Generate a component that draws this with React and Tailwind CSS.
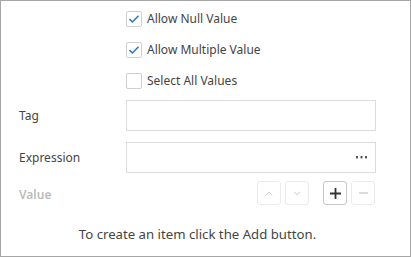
import React from "react";

function Check({ checked, label }) {
  return (
    <div className="flex h-[31px] items-center">
      <div className="flex h-[16px] w-[16px] items-center justify-center rounded-[2px] border border-[#cfcfcf] bg-white">
        {checked && (
          <svg width="12" height="10" viewBox="0 0 12 10">
            <path d="M1.5 5.2 L4.5 8 L10.5 1.8" fill="none" stroke="#337ab7" strokeWidth="1.6" />
          </svg>
        )}
      </div>
      <span className="ml-[5px] text-[12px] leading-none text-[#444]">{label}</span>
    </div>
  );
}

function Btn({ children, strong }) {
  return (
    <div
      className={
        "flex h-[24px] w-[24px] items-center justify-center rounded-[3px] border bg-white " +
        (strong ? "border-[#c8c8c8]" : "border-[#ebebeb]")
      }
    >
      {children}
    </div>
  );
}

export default function App() {
  return (
    <div
      className="box-border flex h-[257px] w-[411px] flex-col border border-[#a6a6a6] bg-white"
      style={{ fontFamily: '"Noto Sans", "Open Sans", sans-serif' }}
    >
      <div className="flex flex-col pl-[125px] pt-[2px]">
        <Check checked label="Allow Null Value" />
        <Check checked label="Allow Multiple Value" />
        <Check label="Select All Values" />
      </div>
      <div className="mt-[4px] flex items-center">
        <div className="w-[125px] pl-[18px] text-[12px] text-[#444]">Tag</div>
        <div className="h-[31px] w-[250px] border border-[#dcdcdc]" />
      </div>
      <div className="mt-[11px] flex items-center">
        <div className="w-[125px] pl-[18px] text-[12px] text-[#444]">Expression</div>
        <div className="flex h-[31px] w-[250px] items-center justify-end border border-[#dcdcdc] pr-[8px]">
          <svg width="11" height="3" viewBox="0 0 11 3">
            <rect x="0" y="0" width="2" height="2.4" fill="#555" />
            <rect x="4.5" y="0" width="2" height="2.4" fill="#555" />
            <rect x="9" y="0" width="2" height="2.4" fill="#555" />
          </svg>
        </div>
      </div>
      <div className="mt-[8px] flex items-center">
        <div className="w-[256px] pl-[18px] pt-[3px] text-[12px] font-semibold text-[#bdbdbd]">Value</div>
        <div className="flex gap-[4px]">
          <Btn>
            <svg width="8" height="5" viewBox="0 0 8 5">
              <path d="M1 4.2 L4 1.2 L7 4.2" fill="none" stroke="#c4c4c4" strokeWidth="1" />
            </svg>
          </Btn>
          <Btn>
            <svg width="8" height="5" viewBox="0 0 8 5">
              <path d="M1 0.8 L4 3.8 L7 0.8" fill="none" stroke="#c4c4c4" strokeWidth="1" />
            </svg>
          </Btn>
        </div>
        <div className="ml-[14px] flex gap-[4px]">
          <Btn strong>
            <svg width="11" height="11" viewBox="0 0 11 11">
              <path d="M5.5 0 V11 M0 5.5 H11" stroke="#333" strokeWidth="1.8" />
            </svg>
          </Btn>
          <Btn>
            <svg width="9" height="2" viewBox="0 0 9 2">
              <path d="M0 1 H9" stroke="#cfcfcf" strokeWidth="1.5" />
            </svg>
          </Btn>
        </div>
      </div>
      <div className="mt-[20px] pr-[16px] text-center text-[13.2px] text-[#444]">
        To create an item click the Add button.
      </div>
    </div>
  );
}
